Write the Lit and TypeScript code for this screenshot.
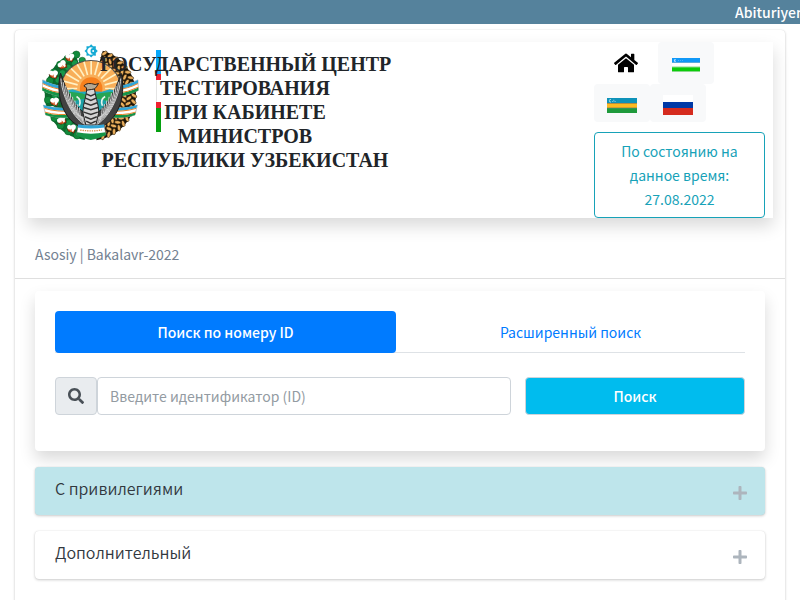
import { LitElement, html, css, svg } from "lit";
import { customElement, state } from "lit/decorators.js";
import { classMap } from "lit/directives/class-map.js";

const HOME =
  "M280.37 148.26L96 300.11V464a16 16 0 0 0 16 16l112.06-.29a16 16 0 0 0 15.92-16V368a16 16 0 0 1 16-16h64a16 16 0 0 1 16 16v95.64a16 16 0 0 0 16 16.05L464 480a16 16 0 0 0 16-16V300L295.67 148.26a12.19 12.19 0 0 0-15.3 0zM571.6 251.47L488 182.56V44.05a12 12 0 0 0-12-12h-56a12 12 0 0 0-12 12v72.61L318.47 43a48 48 0 0 0-61 0L4.34 251.47a12 12 0 0 0-1.6 16.9l25.5 31A12 12 0 0 0 45.15 301l235.22-193.74a12.19 12.19 0 0 1 15.3 0L530.9 301a12 12 0 0 0 16.9-1.6l25.5-31a12 12 0 0 0-1.7-16.93z";
const SEARCH =
  "M505 442.7L405.3 343c-4.5-4.5-10.6-7-17-7H372c27.6-35.3 44-79.7 44-128C416 93.1 322.9 0 208 0S0 93.1 0 208s93.1 208 208 208c48.3 0 92.7-16.4 128-44v16.3c0 6.4 2.5 12.5 7 17l99.7 99.7c9.4 9.4 24.6 9.4 33.9 0l28.3-28.3c9.4-9.4 9.4-24.6.1-34zM208 336c-70.7 0-128-57.2-128-128 0-70.7 57.2-128 128-128 70.7 0 128 57.2 128 128 0 70.7-57.2 128-128 128z";
const PLUS =
  "M416 208H272V64c0-17.67-14.33-32-32-32h-32c-17.67 0-32 14.33-32 32v144H32c-17.67 0-32 14.33-32 32v32c0 17.67 14.33 32 32 32h144v144c0 17.67 14.33 32 32 32h32c17.67 0 32-14.33 32-32V304h144c17.67 0 32-14.33 32-32v-32c0-17.67-14.33-32-32-32z";

@customElement("state-emblem")
class StateEmblem extends LitElement {
  static styles = css`
    :host { display: block; }
    .emblem { display: block; width: 97px; height: 97px; }
  `;

  /** Point on the wreath: angle in degrees, clockwise from the top. */
  private at(deg: number, r: number) {
    const a = (deg * Math.PI) / 180;
    return { x: 165 + r * Math.sin(a), y: 161 - r * Math.cos(a) };
  }

  /** One half of the wreath, as a thick arc between two angles. */
  private arc(from: number, to: number, r: number) {
    const p = this.at(from, r);
    const q = this.at(to, r);
    return `M${p.x} ${p.y}A${r} ${r} 0 0 1 ${q.x} ${q.y}`;
  }

  private grains() {
    const out = [];
    for (let d = 19; d < 168; d += 8) {
      for (const [r, tilt, shift] of [[132, 35, 0], [117, -35, 4], [102, 35, 0], [88, -35, 4]]) {
        const p = this.at(d + shift, r);
        out.push(svg`<ellipse cx=${p.x} cy=${p.y} rx="9.500" ry="5" fill="#e9ae5c" stroke="#1c1204" stroke-width="1.600"
          transform="rotate(${d - 90 + tilt} ${p.x} ${p.y})"/>`);
      }
    }
    return out;
  }

  private cotton() {
    return [[80, 70, 1], [103, 47, 0], [54, 98, 0], [57, 180, 0], [78, 237, 1], [108, 261, 0], [48, 208, 1]].map(
      ([x, y, f]) => svg`<g transform="translate(${x} ${y}) rotate(${f ? -20 : 15})">
        <path d="M-12 5L-5 12L3 10L11 13L13 3L0 0Z" fill="#c8501c" stroke="#3a1404" stroke-width="1.5"/>
        <circle cx="-6" cy="-1" r="7" fill="#fff"/><circle cx="5" cy="-4" r="8" fill="#fff"/>
        <circle cx="4" cy="4" r="6" fill="#fff"/><path d="M-2 12L1 1L5 12Z" fill="#d4521c"/></g>`
    );
  }

  private leaves() {
    const out = [];
    for (let d = 198; d < 346; d += 13) {
      const p = this.at(d, 128);
      const q = this.at(d + 6, 106);
      out.push(svg`<circle cx=${p.x} cy=${p.y} r="11" fill="#128a3c" stroke="#07551f" stroke-width="1.500"/>
        <circle cx=${q.x} cy=${q.y} r="10" fill="#17974a" stroke="#07551f" stroke-width="1.5"/>`);
    }
    return out;
  }

  private ribbon() {
    return svg`
      <path d="M22 116Q52 132 92 136L90 168Q50 164 21 148Z" fill="#fff" stroke="#555" stroke-width="1"/>
      <path d="M22 116Q52 132 92 136V146Q50 141 22 126Z" fill="#31a6d8"/>
      <path d="M21 139Q50 154 90 158V168Q50 164 21 148Z" fill="#159447"/>
      <path d="M22 127Q50 142 92 147M21 138Q50 153 90 157" fill="none" stroke="#e8842a" stroke-width="3"/>
      <path d="M24 192Q60 203 112 200L117 228Q66 234 31 222Z" fill="#fff" stroke="#555" stroke-width="1"/>
      <path d="M24 192Q60 203 112 200L114 209Q64 212 27 201Z" fill="#31a6d8"/>
      <path d="M29 214Q66 226 115 219L117 228Q66 234 31 222Z" fill="#159447"/>
      <path d="M28 202Q64 213 114 210M29 213Q66 225 115 218" fill="none" stroke="#e8842a" stroke-width="3"/>`;
  }

  private wing() {
    const out = [];
    for (let i = 0; i < 9; i++) {
      const x = 77 + i * 7;
      const y = 112 + i * 11;
      out.push(svg`<path d="M${x} ${y}C${x + 2} ${y + 45} ${110 + i * 4} ${236 - i} 160 ${256 - i * 4}"
        fill="none" stroke="#d0d0d0" stroke-width="3"/>`);
    }
    return svg`<path d="M76 96C62 150 76 226 132 256L162 258V222C130 210 100 170 76 96Z" fill="#414141" stroke="#1c1c1c" stroke-width="3"/>${out}`;
  }

  render() {
    const rays = Array.from({ length: 13 }, (_, i) => {
      const a = ((-90 + i * 15) * Math.PI) / 180;
      return svg`<line x1=${168 + 42 * Math.sin(a)} y1=${142 - 42 * Math.cos(a)} x2=${168 + 96 * Math.sin(a)} y2=${142 - 96 * Math.cos(a)} stroke="#fff1c4" stroke-width="5"/>`;
    });
    const star = Array.from({ length: 16 }, (_, i) => {
      const r = i % 2 ? 15 : 20;
      const a = (i * Math.PI) / 8;
      return `${168 + r * Math.sin(a)},${29 - r * Math.cos(a)}`;
    }).join(" ");
    return html`<svg class="emblem" viewBox="20 8 292 292" role="img" aria-label="Герб Узбекистана">
      <path d=${this.arc(187, 340, 112)} fill="none" stroke="#0c6a2e" stroke-width="50" />
      ${this.leaves()} ${this.cotton()}
      <path d=${this.arc(16, 172, 112)} fill="none" stroke="#1d1508" stroke-width="52" />
      ${this.grains()}
      ${this.ribbon()}
      <g transform="translate(331 0) scale(-1 1)">${this.ribbon()}</g>
      <clipPath id="disc"><circle cx="167" cy="150" r="91" /></clipPath>
      <circle cx="167" cy="150" r="94" fill="#4d4d4d" />
      <g clip-path="url(#disc)">
        <rect x="70" y="55" width="194" height="190" fill="#f8ae58" />
        ${rays}
        <circle cx="168" cy="142" r="34" fill="#f7811e" />
        <path d="M74 152L92 148L112 144L136 152L165 150L200 152L224 144L260 152V250H74Z" fill="#24a9bd" />
        <path d="M74 166L104 152L140 156L165 165L194 156L230 152L256 166L240 215H90Z" fill="#26a554" />
        <path d="M104 186Q150 166 160 176L140 220ZM230 186Q184 166 174 176L194 220Z" fill="#1c9fa6" />
        <path d="M124 166Q140 176 132 194M210 166Q194 176 202 194" fill="none" stroke="#e8f4ed" stroke-width="5" />
      </g>
      ${this.wing()}
      <g transform="translate(334 0) scale(-1 1)">${this.wing()}</g>
      <path d="M155 143C152 175 141 194 144 218L152 252H182L190 218C193 194 182 175 178 143Z" fill="#d5d5d5" stroke="#222" stroke-width="3" />
      <path d="M153 158L167 164L180 158M151 171L167 178L183 171M147 185L167 192L186 185M145 199L167 206L189 199M146 213L167 220L188 213M149 227L167 234L185 227M153 240L167 247L182 240" fill="none" stroke="#333" stroke-width="4.500" />
      <path d="M146 134Q156 122 180 130L190 127L184 137Q180 145 169 145L154 147Q158 139 146 134Z" fill="#b5a894" stroke="#332317" stroke-width="3" />
      <path d="M129 250Q167 256 207 250L213 282Q167 292 123 282Z" fill="#fff" stroke="#444" stroke-width="2" />
      <path d="M129 250Q167 256 207 250L208 259Q167 265 127 259Z" fill="#31a6d8" />
      <path d="M125 274Q167 283 211 274L213 282L190 292L167 297L144 292L123 282Z" fill="#159447" />
      <path d="M135 267Q168 272 200 267" fill="none" stroke="#d58c45" stroke-width="4" stroke-dasharray="4 3" />
      <polygon points=${star} fill="#14aad4" />
      <path d="M174 20A11 11 0 1 0 174 38A8 9 0 1 1 174 20Z" fill="#fff" />
      <circle cx="174" cy="29" r="3" fill="#fff" />
    </svg>`;
  }
}

@customElement("app-root")
class AppRoot extends LitElement {
  @state() private tab = 0;
  @state() private open = -1;

  static styles = css`
    :host {
      display: block;
      min-height: 100vh;
      overflow: hidden;
      background: #fff;
      color: #212529;
      font-family: "Source Sans Pro", "Noto Sans CJK SC", sans-serif;
      font-size: 14px;
      line-height: 24px;
    }
    * { box-sizing: border-box; }
    button, input { font: inherit; margin: 0; }
    button { cursor: pointer; }
    .ticker {
      height: 24px;
      padding-left: calc(100% - 65px);
      overflow: hidden;
      white-space: nowrap;
      background: #55829c;
      color: #fff;
      font-weight: 500;
    }
    .page {
      margin: 6px 15px 0;
      min-height: 100vh;
      border-radius: 4px;
      box-shadow: 0 0 1px rgba(0, 0, 0, 0.13), 0 1px 3px rgba(0, 0, 0, 0.2);
    }
    .top { padding: 12px 12px 0 13px; }
    .banner {
      display: grid;
      grid-template-columns: 58px 290px 1fr 171px;
      min-height: 176px;
      padding: 0 8px 0 14px;
      box-shadow: 0 8px 16px rgba(0, 0, 0, 0.15);
    }
    .brand {
      grid-area: 1 / 1 / 2 / 3;
      display: flex;
      gap: 17px;
      padding-top: 2px;
      align-items: flex-start;
    }
    .stripe { width: 6px; height: 82px; margin-top: 6px; }
    .title {
      grid-area: 1 / 2 / 2 / 3;
      position: relative;
      margin: 0;
      padding-top: 10px;
      font: bold 20px/24px "Liberation Serif", serif;
      text-align: center;
      white-space: nowrap;
    }
    .tools { grid-area: 1 / 4; display: flex; flex-direction: column; }
    .langs { display: flex; flex-wrap: wrap; }
    .home {
      display: flex;
      width: 64px;
      height: 42px;
      align-items: center;
      justify-content: center;
      color: #000;
    }
    .home svg { width: 24px; height: 22px; }
    .lang {
      display: flex;
      width: 56px;
      height: 38px;
      padding: 4px 0 0;
      align-items: center;
      justify-content: center;
      border: 0;
      border-radius: 4px;
      background: #f8f9fa;
    }
    .lang.tall { height: 42px; }
    .status {
      margin-top: 10px;
      padding: 6px 12px;
      height: 86px;
      border: 1px solid #17a2b8;
      border-radius: 4px;
      background: transparent;
      color: #17a2b8;
    }
    .crumb {
      margin-top: 12px;
      padding: 12px 20px;
      border-bottom: 1px solid #dfdfdf;
      color: #748292;
    }
    .body { display: flex; flex-direction: column; padding: 12px 20px 20px; }
    .search {
      min-height: 160px;
      padding: 20px;
      border-radius: 4px;
      background: #fff;
      box-shadow: 0 8px 16px rgba(0, 0, 0, 0.15);
    }
    .tabs { display: flex; height: 42px; border-bottom: 1px solid #dee2e6; }
    .tab {
      flex: 1;
      height: 42px;
      border: 0;
      border-radius: 4px;
      background: transparent;
      color: #007bff;
    }
    .tab.first { flex: none; width: calc(50% - 4px); }
    .tab.active { background: #007bff; color: #fff; font-weight: 500; }
    .form { display: flex; margin-top: 24px; gap: 14px; }
    .group { flex: 1; display: flex; min-width: 0; }
    .icon {
      display: flex;
      width: 42px;
      align-items: center;
      justify-content: center;
      border: 1px solid #ced4da;
      border-radius: 4px;
      background: #e9ecef;
      color: #495057;
    }
    .icon svg { width: 16px; height: 16px; }
    .field {
      flex: 1;
      min-width: 0;
      height: 38px;
      padding: 0 12px;
      border: 1px solid #ced4da;
      border-radius: 4px;
      background: #fff;
      color: #495057;
    }
    .field::placeholder { color: #939ba2; opacity: 1; }
    .submit {
      width: calc(32% - 1px);
      height: 38px;
      border: 1px solid #ced4da;
      border-radius: 4px;
      background: #00bcee;
      color: #fff;
      font-weight: 500;
    }
    .panel {
      display: flex;
      width: 100%;
      height: 48px;
      margin-top: 16px;
      padding: 0 18px 0 20px;
      align-items: center;
      justify-content: space-between;
      border: 0;
      border-radius: 4px;
      background: #fff;
      color: #32383e;
      font-size: 16px;
      font-weight: 350;
      box-shadow: 0 0 1px rgba(0, 0, 0, 0.13), 0 1px 3px rgba(0, 0, 0, 0.2);
    }
    .panel.first { background: #bee5eb; }
    .panel span { padding-bottom: 6px; }
    .panel svg { width: 14px; height: 16px; margin-top: 4px; color: #adb5bd; }
  `;

  private uz() {
    return html`<svg width="28" height="14" viewBox="0 0 28 14" aria-hidden="true">
      <rect width="28" height="14" fill="#fff" />
      <rect width="28" height="5" fill="#1098f7" />
      <rect y="4" width="28" height="1" fill="#5aa9df" />
      <path d="M4 1A1.6 1.6 0 1 0 4 4A2 2 0 0 1 4 1Z" fill="#b5defc" />
      <path d="M6 2.500h5" stroke="#4fb0fa" stroke-dasharray="1 1" />
      <rect y="9" width="28" height="5" fill="#0bcc0b" />
      <path d="M0 9h28M0 13.500h28" stroke="#8cd78c" />
    </svg>`;
  }
  private kaa() {
    return html`<svg width="30" height="15" viewBox="0 0 30 15" aria-hidden="true">
      <rect width="30" height="15" fill="#0e92b9" />
      <rect y="5" width="30" height="5" fill="#fcbb20" />
      <path d="M0 5.500h30M0 9.900h30" stroke="#b98c3c" />
      <rect y="10.400" width="30" height="4.600" fill="#1f9a3c" />
      <path d="M4 1.500A1.300 1.300 0 1 0 4 4" fill="none" stroke="#d5edf5" stroke-width=".7" />
      <path d="M5 3.500h4M6 2.300h2" stroke="#9fd3e4" stroke-dasharray="1 .6" stroke-width=".7" />
    </svg>`;
  }
  private ru() {
    return html`<svg width="30" height="20" viewBox="0 0 30 20" aria-hidden="true">
      <rect width="30" height="7" fill="#fff" />
      <rect y="7" width="30" height="6" fill="#0039a6" />
      <rect y="13" width="30" height="7" fill="#d52b1e" />
    </svg>`;
  }

  render() {
    return html`
      <div class="ticker">Abituriyentlar</div>
      <main class="page">
        <div class="top">
          <header class="banner">
            <div class="brand">
              <state-emblem></state-emblem>
              <svg class="stripe" viewBox="0 0 6 82" aria-hidden="true">
                <rect width="6" height="82" fill="#fff" />
                <path d="M.5 0V82" stroke="#e4e4e4" />
                <rect width="5" height="24" fill="#08a8fa" />
                <rect y="24" width="5" height="6" fill="#ef2030" />
                <rect y="52" width="5" height="6" fill="#ef2030" />
                <rect y="58" width="5" height="24" fill="#05a010" />
              </svg>
            </div>
            <h1 class="title">
              ГОСУДАРСТВЕННЫЙ ЦЕНТР<br />ТЕСТИРОВАНИЯ<br />ПРИ КАБИНЕТЕ<br />МИНИСТРОВ<br />РЕСПУБЛИКИ УЗБЕКИСТАН
            </h1>
            <div class="tools">
              <nav class="langs">
                <a class="home" href="#" aria-label="Главная">
                  <svg viewBox="0 0 576 512"><path fill="currentColor" d=${HOME} /></svg>
                </a>
                <button class="lang tall" aria-label="O‘zbekcha">${this.uz()}</button>
                <button class="lang" aria-label="Qaraqalpaqsha">${this.kaa()}</button>
                <button class="lang" aria-label="Русский">${this.ru()}</button>
              </nav>
              <button class="status">По состоянию на<br />данное время:<br />27.08.2022</button>
            </div>
          </header>
        </div>
        <div class="crumb">Asosiy | Bakalavr-2022</div>
        <div class="body">
          <section class="search">
            <div class="tabs" role="tablist">
              ${["Поиск по номеру ID", "Расширенный поиск"].map(
                (t, i) => html`<button
                  role="tab"
                  aria-selected=${this.tab === i}
                  class=${classMap({ tab: true, first: i === 0, active: this.tab === i })}
                  @click=${() => (this.tab = i)}
                >${t}</button>`
              )}
            </div>
            <form class="form" @submit=${(e: Event) => e.preventDefault()}>
              <div class="group">
                <label class="icon" for="ident" aria-label="Идентификатор">
                  <svg viewBox="0 0 512 512"><path fill="currentColor" d=${SEARCH} /></svg>
                </label>
                <input class="field" id="ident" type="text" placeholder="Введите идентификатор (ID)" />
              </div>
              <button class="submit">Поиск</button>
            </form>
          </section>
          ${["С привилегиями", "Дополнительный"].map(
            (t, i) => html`<button
              class=${classMap({ panel: true, first: i === 0 })}
              aria-expanded=${this.open === i}
              @click=${() => (this.open = this.open === i ? -1 : i)}
            ><span>${t}</span><svg viewBox="0 0 448 512"><path fill="currentColor" d=${PLUS} /></svg></button>`
          )}
        </div>
      </main>
    `;
  }
}
